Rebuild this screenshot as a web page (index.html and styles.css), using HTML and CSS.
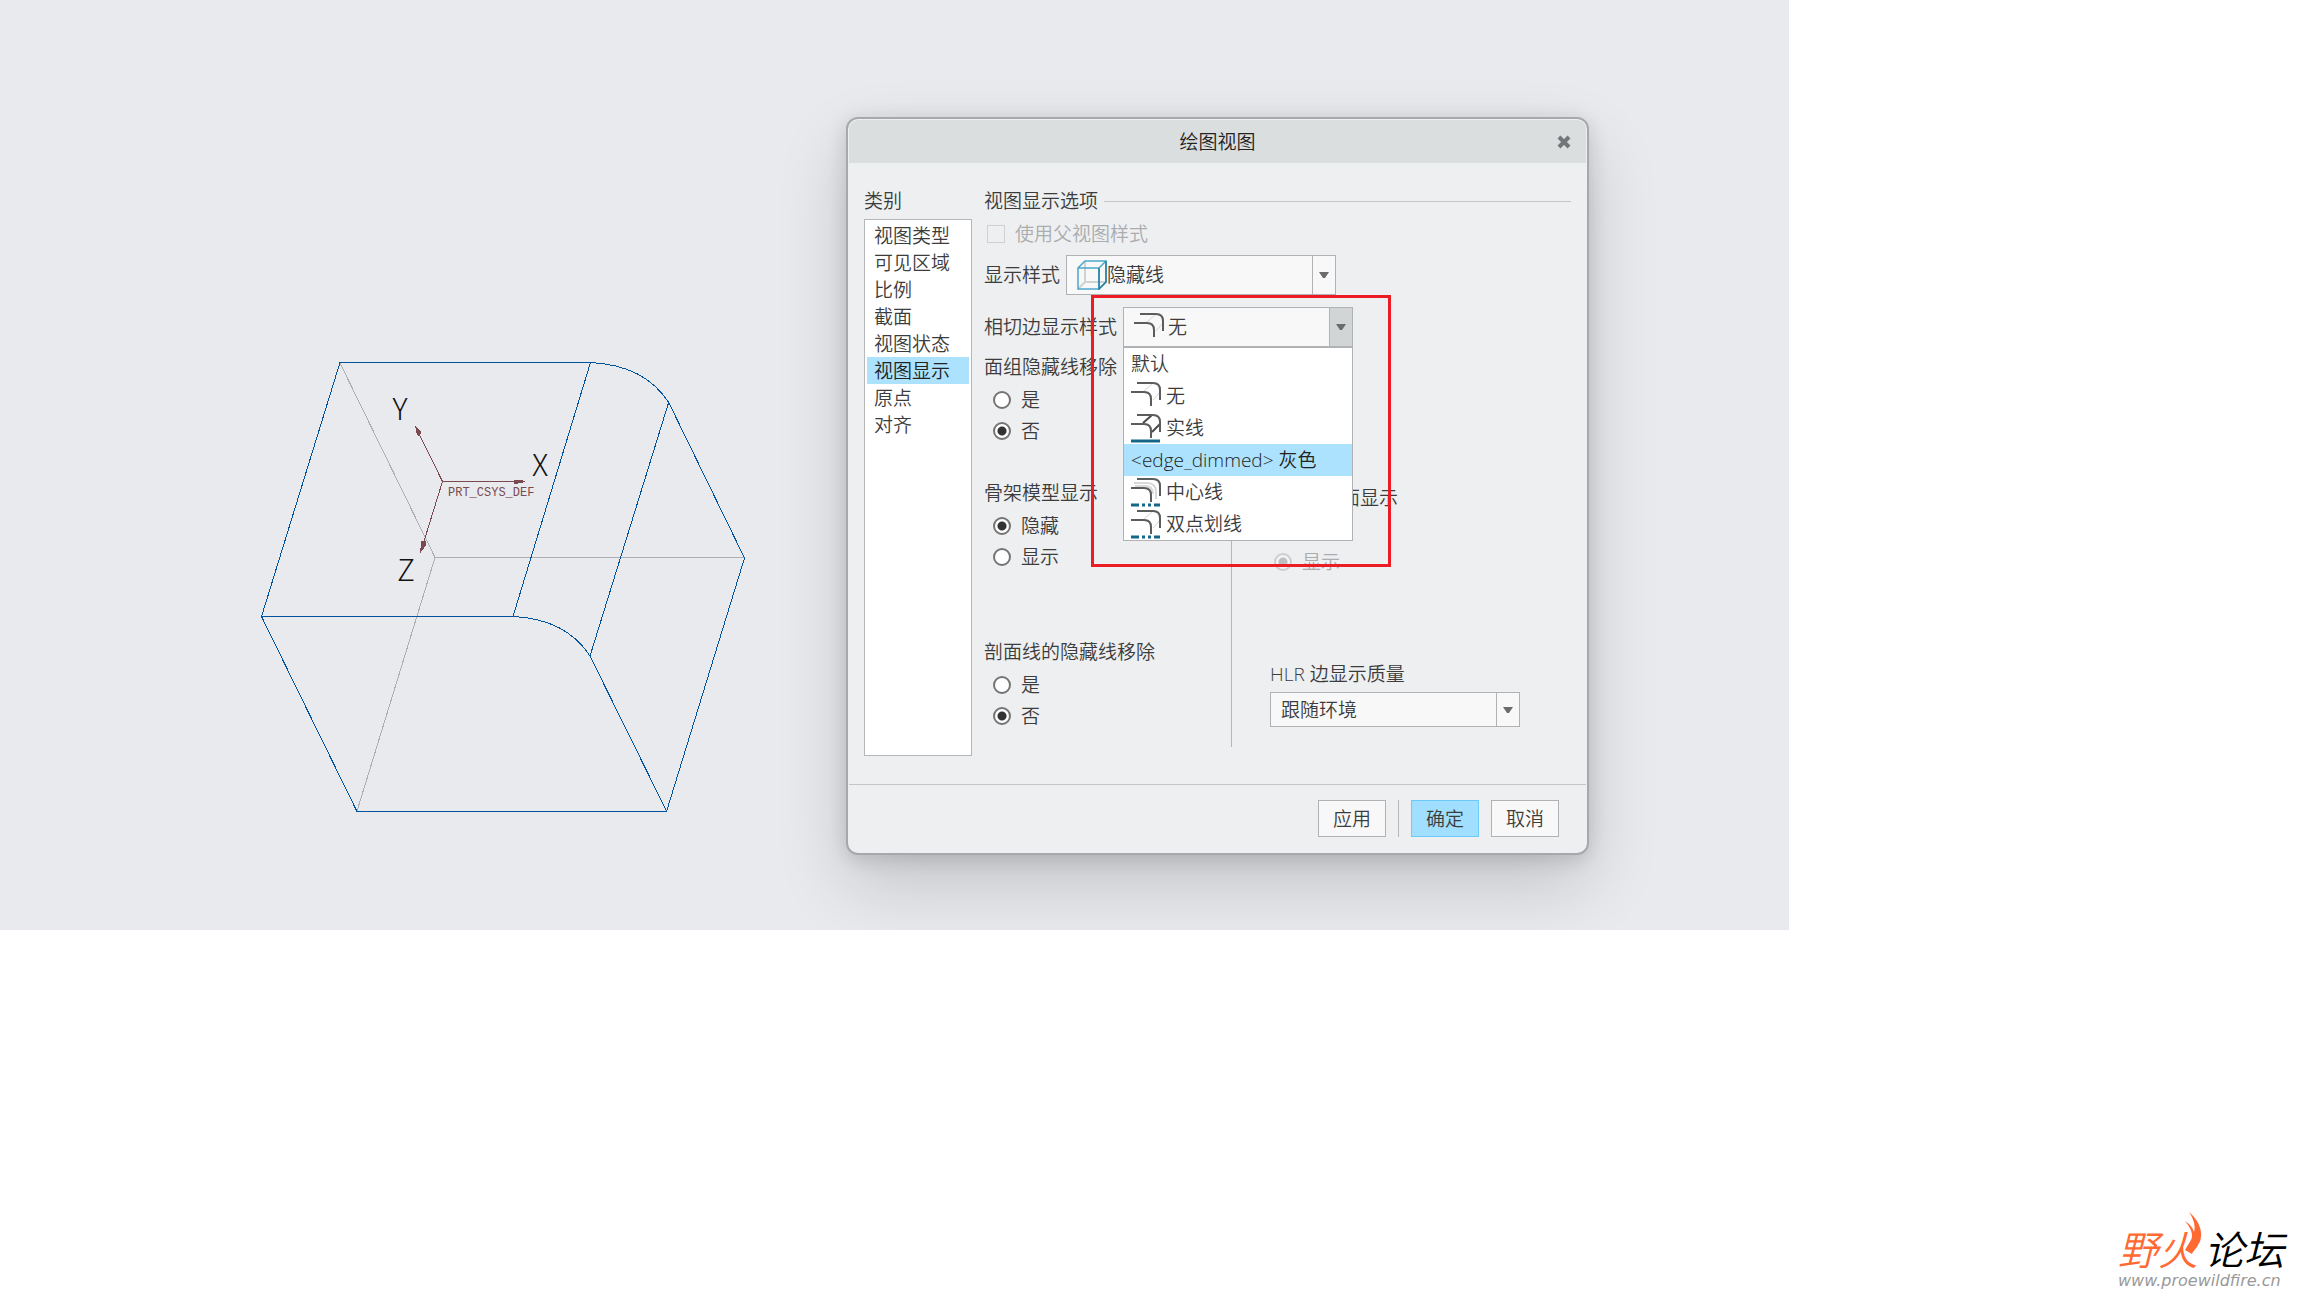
FILE: index.html
```
<!DOCTYPE html>
<html lang="zh-CN">
<head>
    <meta charset="UTF-8">
    <meta name="viewport" content="width=device-width, initial-scale=1.0">
    <title>绘图视图</title>
    <link rel="stylesheet" href="styles.css">
</head>
<body>
    <!-- shared icon shapes -->
    <svg class="defs" width="0" height="0">
        <symbol id="edge" viewBox="0 0 30 30">
            <path d="M13 10L22 2M22 19L29 11" stroke="#d4d4d4" stroke-width="1" fill="none"/>
            <path d="M6 2H22Q29 2 29 9V19M0 11H13Q20 11 20 18V25" stroke="#5c5c5c" stroke-width="2" fill="none"/>
        </symbol>
        <symbol id="edge-solid" viewBox="0 0 30 30">
            <path d="M12 10L21 2M21 19L29 11" stroke="#4a4a4a" stroke-width="2" fill="none"/>
            <path d="M6 2H22Q29 2 29 9V19M0 11H13Q20 11 20 18V25" stroke="#5c5c5c" stroke-width="2" fill="none"/>
            <path d="M0 28H29" stroke="#15678a" stroke-width="3"/>
        </symbol>
        <symbol id="edge-center" viewBox="0 0 30 30">
            <path d="M3 6H16Q25 6 25 15V22M4 9H14Q22 9 22 17" stroke="#d8d8d8" stroke-width="2" fill="none"/>
            <path d="M6 2H22Q29 2 29 9V19M0 11H13Q20 11 20 18V25" stroke="#5c5c5c" stroke-width="2" fill="none"/>
            <path d="M0 28H8M11 28H14M17 28H20M23 28H29" stroke="#15678a" stroke-width="3"/>
        </symbol>
        <symbol id="edge-phantom" viewBox="0 0 30 30">
            <path d="M13 10L22 2M22 19L29 11" stroke="#d4d4d4" stroke-width="1" fill="none"/>
            <path d="M6 2H22Q29 2 29 9V19M0 11H13Q20 11 20 18V25" stroke="#5c5c5c" stroke-width="2" fill="none"/>
            <path d="M0 28H8M11 28H14M17 28H20M23 28H29" stroke="#15678a" stroke-width="3"/>
        </symbol>
        <symbol id="arrow" viewBox="0 0 10 6">
            <path d="M0 0H10L6 6H4Z" fill="#6b6b6b"/>
        </symbol>
    </svg>

    <main class="workspace">
        <svg class="drawing" width="510" height="490" viewBox="0 0 510 490">
            <g class="hidden-edges">
                <path d="M90 23L185 217.5H494M185 217.5L107 471"/>
            </g>
            <g class="edges">
                <path d="M90 22.5H340Q395 25 419 63L494.500 218L416.500 471.500H107L11.500 276.500Z"/>
                <path d="M11.500 276.500H263Q316 279 340 316L416.500 471M340.500 22.500L263 276.500M418.500 63L340 316"/>
            </g>
            <g class="csys">
                <path d="M192.500 141.500H275M192.500 141.500L165.500 86.500M192.500 141.500L170.500 212.500"/>
                <path class="tip" d="M264 140H268L275 141.500L268 143H264ZM166 87L171 92L169 96L167 93ZM170.500 212L175 206V201H172Z"/>
                <text x="198" y="156">PRT_CSYS_DEF</text>
            </g>
            <g class="axes">
                <text x="150" y="80" text-anchor="middle">Y</text>
                <text x="290" y="136" text-anchor="middle">X</text>
                <text x="156" y="241" text-anchor="middle">Z</text>
            </g>
        </svg>

        <section class="dialog">
            <header class="titlebar">
                <h1>绘图视图</h1>
                <button type="button" class="close" aria-label="关闭">
                    <svg width="14" height="14" viewBox="0 0 14 14"><path d="M2 2L12 12M12 2L2 12" stroke="#737578" stroke-width="4"/></svg>
                </button>
            </header>

            <div class="dialog-body">
                <nav class="category">
                    <h2>类别</h2>
                    <ul>
                        <li><button type="button">视图类型</button></li>
                        <li><button type="button">可见区域</button></li>
                        <li><button type="button">比例</button></li>
                        <li><button type="button">截面</button></li>
                        <li><button type="button">视图状态</button></li>
                        <li><button type="button" class="selected">视图显示</button></li>
                        <li><button type="button">原点</button></li>
                        <li><button type="button">对齐</button></li>
                    </ul>
                </nav>

                <div class="options">
                    <h2 class="ruled">视图显示选项</h2>
                    <label class="check"><input type="checkbox" disabled>使用父视图样式</label>

                    <div class="row">
                        <label for="style">显示样式</label>
                        <div class="combo combo-style">
                            <svg class="combo-icon" width="30" height="30" viewBox="0 0 30 30">
                                <path d="M8 1V22H29M8 22L1 29" stroke="#d0d2d3" stroke-width="2" fill="none"/>
                                <path d="M1 8H22V29H1ZM1 8L8 1H29V22L22 29M22 8L29 1" stroke="#4ba8cb" stroke-width="1.500" fill="none"/>
                                <path d="M22 8V29L29 22V1" stroke="#2480a3" stroke-width="1.500" fill="none"/>
                            </svg>
                            <select id="style"><option>隐藏线</option></select>
                            <span class="drop"><svg width="10" height="6"><use href="#arrow"/></svg></span>
                        </div>
                    </div>

                    <div class="row">
                        <label for="tangent">相切边显示样式</label>
                        <div class="combo-wrap">
                            <div class="combo combo-tangent open">
                                <svg class="combo-icon" width="30" height="30"><use href="#edge"/></svg>
                                <select id="tangent"><option>无</option></select>
                                <span class="drop"><svg width="10" height="6"><use href="#arrow"/></svg></span>
                            </div>
                            <ul class="menu" role="listbox">
                                <li role="option">默认</li>
                                <li role="option"><svg width="30" height="30"><use href="#edge"/></svg>无</li>
                                <li role="option"><svg width="30" height="30"><use href="#edge-solid"/></svg>实线</li>
                                <li role="option" class="selected">&lt;edge_dimmed&gt; 灰色</li>
                                <li role="option"><svg width="30" height="30"><use href="#edge-center"/></svg>中心线</li>
                                <li role="option"><svg width="30" height="30"><use href="#edge-phantom"/></svg>双点划线</li>
                            </ul>
                        </div>
                    </div>

                    <div class="columns">
                        <div class="left">
                            <fieldset>
                                <legend>面组隐藏线移除</legend>
                                <label><input type="radio" name="quilt">是</label>
                                <label><input type="radio" name="quilt" checked>否</label>
                            </fieldset>
                            <fieldset>
                                <legend>骨架模型显示</legend>
                                <label><input type="radio" name="skeleton" checked>隐藏</label>
                                <label><input type="radio" name="skeleton">显示</label>
                            </fieldset>
                            <fieldset>
                                <legend>剖面线的隐藏线移除</legend>
                                <label><input type="radio" name="hatch">是</label>
                                <label><input type="radio" name="hatch" checked>否</label>
                            </fieldset>
                        </div>
                        <div class="right">
                            <fieldset class="disabled">
                                <legend>焊件横截面显示</legend>
                                <label><input type="radio" name="weld" disabled>隐藏</label>
                                <label><input type="radio" name="weld" checked disabled>显示</label>
                            </fieldset>
                            <div class="quality">
                                <label for="hlr">HLR 边显示质量</label>
                                <div class="combo combo-plain">
                                    <select id="hlr"><option>跟随环境</option></select>
                                    <span class="drop"><svg width="10" height="6"><use href="#arrow"/></svg></span>
                                </div>
                            </div>
                        </div>
                    </div>
                </div>
            </div>

            <footer class="actions">
                <button type="button">应用</button>
                <span class="divider"></span>
                <button type="button" class="primary">确定</button>
                <button type="button">取消</button>
            </footer>

            <div class="highlight"></div>
        </section>
    </main>

    <div class="watermark">
        <div class="brand">
            <span class="fire">野火</span><span>论坛</span>
            <svg class="flame" width="18" height="44" viewBox="0 0 18 44"><path d="M5 0C16 9 20 22 15 31C13 36 9 39 8 42L1 38C4 33 5 31 7 28C10 22 6 15 1 9C6 12 9 16 10 20C12 13 9 6 5 0Z" fill="#ff6a33"/></svg>
        </div>
        <div class="url">www.proewildfire.cn</div>
    </div>
</body>
</html>
```

FILE: styles.css
```
* {
    box-sizing: border-box;
}

body {
    margin: 0;
    min-height: 100vh;
    display: flex;
    flex-direction: column;
    background: #fff;
    color: #3c3c3c;
    font: 350 19px/28px "Open Sans", "Noto Sans CJK SC", sans-serif;
}

h1, h2, ul, fieldset, legend {
    margin: 0;
    padding: 0;
    border: 0;
    font: inherit;
    list-style: none;
}

button, select {
    font: inherit;
    color: inherit;
}

.defs {
    position: absolute;
}

.workspace {
    width: 77.65%;
    display: flex;
    align-items: flex-start;
    justify-content: space-between;
    padding: 117px 200px 75px 250px;
    background: #e8eaee;
    overflow: hidden;
}

/* model view */
.drawing {
    flex: none;
    margin-top: 223px;
}

.drawing path {
    fill: none;
    shape-rendering: crispEdges;
}

.hidden-edges {
    stroke: #adaeb1;
}

.edges {
    stroke: #00529c;
}

.csys {
    stroke: #7a4a50;
}

.drawing .tip {
    fill: #7a4a50;
}

.csys text {
    stroke: none;
    fill: #7a4a50;
    font: 12px "Liberation Mono", monospace;
}

.axes text {
    fill: #111;
    font: 200 30px "Noto Sans CJK SC", sans-serif;
}

/* dialog */
.dialog {
    position: relative;
    flex: none;
    width: 743px;
    padding: 1px;
    background: #eeeff1;
    border: 2px solid #a6a8ab;
    border-radius: 12px;
    box-shadow: 0 4px 20px rgba(0, 0, 0, 0.14), 0 30px 70px rgba(0, 0, 0, 0.16);
}

.titlebar {
    display: grid;
    grid-template-columns: 44px 1fr 44px;
    align-items: center;
    height: 43px;
    background: #dadedf;
    border-radius: 9px 9px 0 0;
}

.titlebar h1 {
    grid-column: 2;
    text-align: center;
    color: #222;
}

.close {
    display: flex;
    justify-content: center;
    padding: 0;
    background: none;
    border: 0;
}

.dialog-body {
    display: flex;
    gap: 12px;
    padding: 24px 15px 28px;
    border-bottom: 1px solid #c3c5c8;
}

.category {
    display: flex;
    flex-direction: column;
    gap: 4px;
    width: 108px;
}

.category ul {
    flex: 1;
    padding: 2px;
    background: #fff;
    border: 1px solid #b5b7b9;
}

.category button {
    display: block;
    width: 100%;
    height: 27px;
    padding: 0 7px;
    line-height: 28px;
    text-align: left;
    background: none;
    border: 0;
}

.category .selected, .menu .selected {
    background: #ade2ff;
    color: #222;
}

.options {
    flex: 1;
}

.ruled {
    display: flex;
    align-items: center;
    gap: 6px;
}

.ruled::after {
    content: "";
    flex: 1;
    border-top: 1px solid #c3c5c8;
}

.check {
    display: flex;
    align-items: center;
    gap: 10px;
    height: 20px;
    margin: 9px 0 11px 3px;
    color: #aaacae;
}

.check input {
    appearance: none;
    width: 18px;
    height: 18px;
    margin: 0;
    border: 1px solid #cfd0d2;
}

.row {
    display: flex;
    align-items: center;
    gap: 6px;
    height: 40px;
    margin-bottom: 12px;
}

/* the select lies under the icon and the arrow cell */
.combo {
    display: grid;
    grid-template-columns: 40px 1fr 23px;
    align-items: center;
    height: 40px;
    background: #f8f8f8;
    border: 1px solid #b0b2b4;
}

.combo > * {
    grid-row: 1;
}

.combo select {
    appearance: none;
    grid-column: 1 / -1;
    width: 100%;
    height: 100%;
    padding: 0 24px 0 40px;
    background: none;
    border: 0;
}

.combo-icon {
    grid-column: 1;
    justify-self: end;
    pointer-events: none;
}

.drop {
    grid-column: 3;
    display: flex;
    align-items: center;
    justify-content: center;
    align-self: stretch;
    border-left: 1px solid #b0b2b4;
    pointer-events: none;
}

.open .drop {
    background: #d1d5d6;
}

.combo-style {
    width: 270px;
}

.combo-tangent {
    width: 230px;
}

.combo-tangent select {
    padding-left: 44px;
}

.combo-plain {
    width: 250px;
    height: 35px;
}

.combo-plain select {
    padding-left: 10px;
}

.combo-wrap {
    position: relative;
}

.menu {
    position: absolute;
    z-index: 1;
    top: 100%;
    left: 0;
    right: 0;
    background: #fff;
    border: 1px solid #b0b2b4;
}

.menu li {
    display: flex;
    align-items: center;
    gap: 5px;
    height: 32px;
    padding: 0 7px;
}

.columns {
    display: flex;
    margin-top: -6px;
}

.left {
    width: 247px;
    margin-bottom: 16px;
}

.right {
    flex: 1;
    padding: 131px 0 0 33px;
    margin-bottom: 9px;
    border-left: 1px solid #b5b7b9;
}

fieldset label {
    display: flex;
    align-items: center;
    gap: 10px;
    height: 31px;
    padding-left: 9px;
}

legend {
    margin-bottom: 3px;
}

.left fieldset + fieldset {
    margin-top: 33px;
}

.left fieldset:last-child {
    margin-top: 66px;
}

input[type="radio"] {
    appearance: none;
    width: 18px;
    height: 18px;
    margin: 0;
    border: 2px solid #747474;
    border-radius: 50%;
    background: #fff;
}

input[type="radio"]:checked {
    background: radial-gradient(circle, #333 4px, #fff 5px);
}

.disabled label {
    color: #aaacae;
}

.disabled input[type="radio"] {
    border-color: #cbcdce;
    background: #f2f3f4;
}

.disabled input[type="radio"]:checked {
    background: radial-gradient(circle, #bdbfc0 4px, #f2f3f4 5px);
}

.quality {
    display: flex;
    flex-direction: column;
    gap: 4px;
    margin: 83px 0 20px 5px;
}

.actions {
    display: flex;
    justify-content: flex-end;
    gap: 12px;
    padding: 15px 27px 15px 0;
}

.actions button {
    width: 68px;
    height: 37px;
    padding: 0;
    background: #f8f8f8;
    border: 1px solid #b0b2b4;
}

.actions .primary {
    background: #a0dfff;
    border-color: #6bcaf8;
}

.divider {
    width: 1px;
    background: #b5b7b9;
}

.highlight {
    position: absolute;
    z-index: 2;
    top: 176px;
    left: 243px;
    width: 300px;
    height: 272px;
    border: 3px solid #ed1c24;
    pointer-events: none;
}

/* forum mark */
.watermark {
    align-self: flex-end;
    margin-top: auto;
    padding: 0 20px 6px 0;
    color: #000;
}

.brand {
    position: relative;
    display: flex;
    gap: 6px;
    font: italic 350 40px/48px "Noto Sans CJK SC", sans-serif;
}

.fire {
    color: #ff6a33;
}

.flame {
    position: absolute;
    left: 66px;
    top: -12px;
}

.url {
    color: #999;
    font: italic 16px/18px "DejaVu Sans", sans-serif;
}
```
